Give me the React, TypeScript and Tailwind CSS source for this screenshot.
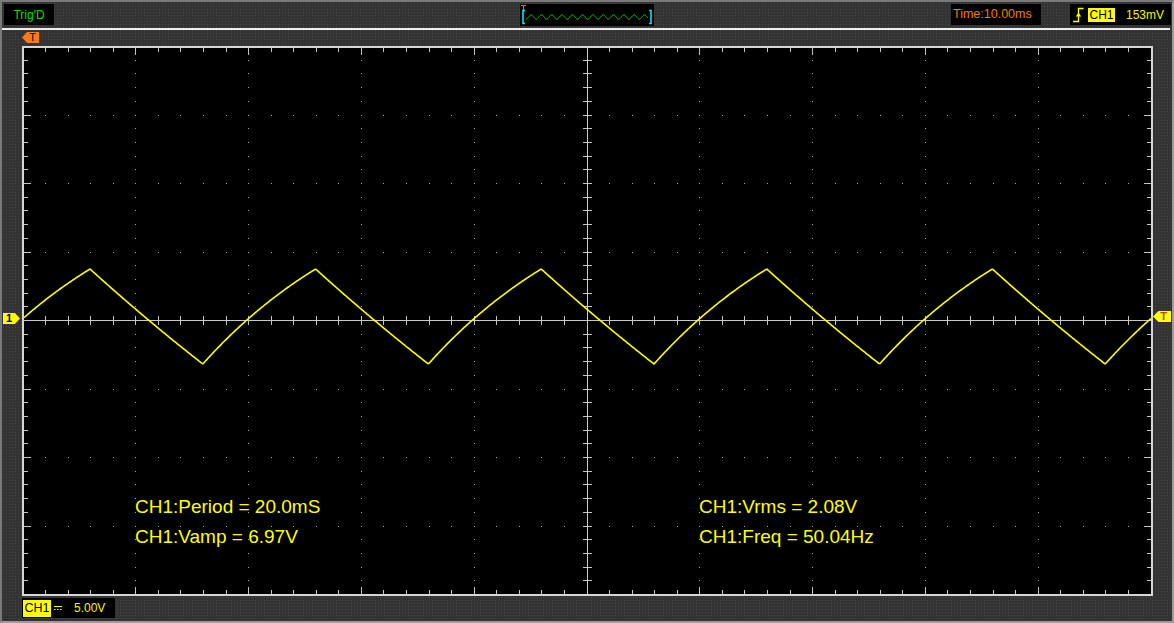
import React from "react";

const W = 1131;
const H = 550;
const DX = 112.8;
const DY = 68.5;

function gx(i: number) {
  return Math.floor(1 + DX * i) + 0.5;
}
function gy(j: number) {
  return Math.floor(0.5 + DY * j) + 0.5;
}
function mx(m: number) {
  return Math.floor(1 + (DX / 5) * m) + 0.5;
}
function my(n: number) {
  return Math.floor(0.5 + (DY / 5) * n) + 0.5;
}

const PK = 223;
const TR = 318;
const AMP = TR - PK;

function waveY(x: number) {
  const half = DX;
  const period = DX * 2;
  const p = (((x - 68) % period) + period) % period;
  if (p < half) {
    const t = p / half;
    const k = 0.15;
    const f = (1 - Math.exp(-k * t)) / (1 - Math.exp(-k));
    return PK + AMP * f;
  }
  const t = (p - half) / half;
  const k = 0.6;
  const f = (1 - Math.exp(-k * t)) / (1 - Math.exp(-k));
  return TR - AMP * f;
}

function Plot() {
  const dots: React.ReactElement[] = [];
  for (let i = 1; i <= 9; i++) {
    if (i === 5) continue;
    for (let n = 1; n <= 39; n++) {
      dots.push(<rect key={`v${i}-${n}`} x={gx(i) - 0.5} y={my(n) - 0.5} width={1} height={1} fill="#a8a8a8" />);
    }
  }
  for (let j = 1; j <= 7; j++) {
    if (j === 4) continue;
    for (let m = 1; m <= 49; m++) {
      dots.push(<rect key={`h${j}-${m}`} x={mx(m) - 0.5} y={gy(j) - 0.5} width={1} height={1} fill="#a8a8a8" />);
    }
  }
  const ticks: string[] = [];
  const cy = gy(4);
  const cx = gx(5);
  for (let m = 1; m <= 49; m++) {
    const x = mx(m);
    const major = m % 5 === 0;
    ticks.push(`M${x} 2V${major ? 9 : 6}`);
    ticks.push(`M${x} 548V${major ? 541 : 544}`);
    ticks.push(`M${x} ${cy - 4.5}V${cy + 4.5}`);
  }
  for (let n = 1; n <= 39; n++) {
    const y = my(n);
    const major = n % 5 === 0;
    ticks.push(`M2 ${y}H${major ? 9 : 6}`);
    ticks.push(`M1129 ${y}H${major ? 1122 : 1125}`);
    ticks.push(`M${cx - 4.5} ${y}H${cx + 4.5}`);
  }
  const pts: string[] = [];
  for (let x = 2; x <= 1129; x += 1) {
    pts.push(`${x},${waveY(x).toFixed(2)}`);
  }
  return (
    <svg width={W} height={H} viewBox={`0 0 ${W} ${H}`} className="block">
      <rect x={0} y={0} width={W} height={H} fill="#000" />
      {dots}
      <path d={ticks.join("")} stroke="#c4c4c4" strokeWidth={1} fill="none" shapeRendering="crispEdges" />
      <path d={`M${cx} 2V548M2 ${cy}H1129`} stroke="#c8c8c8" strokeWidth={1} shapeRendering="crispEdges" />
      <rect x={1} y={1} width={1129} height={548} fill="none" stroke="#d6d6d6" strokeWidth={2} shapeRendering="crispEdges" />
      <polyline points={pts.join(" ")} fill="none" stroke="#ffff00" strokeWidth={1.6} strokeLinejoin="round" />
    </svg>
  );
}

function MiniWave() {
  const pts: string[] = [];
  for (let x = 6; x <= 128; x += 0.5) {
    const y = 13 + 2.2 * Math.sin(((x - 6) / 10.3) * Math.PI * 2 + Math.PI / 2);
    pts.push(`${x},${y.toFixed(2)}`);
  }
  return (
    <svg width={134} height={22} viewBox="0 0 134 22" className="block">
      <path d="M1 1.5H6M3.5 1.5V7" stroke="#e06a10" strokeWidth={1.2} fill="none" />
      <path d="M5 6.5H3V19.5H5" stroke="#00e8f0" strokeWidth={1.6} fill="none" />
      <path d="M129 6.5H131V19.5H129" stroke="#00e8f0" strokeWidth={1.6} fill="none" />
      <polyline points={pts.join(" ")} fill="none" stroke="#00d800" strokeWidth={1} />
    </svg>
  );
}

export default function App() {
  return (
    <div
      className="w-[1174px] h-[623px] relative overflow-hidden border-t-2 border-l-2 border-r-2 border-b-2 border-t-[#7a7a7a] border-l-[#7a7a7a] border-r-[#9c9c9c] border-b-[#9c9c9c] bg-[#333333] bg-[radial-gradient(circle,#474747_0.7px,transparent_0.9px)] bg-[length:3px_3px] font-['Liberation_Sans',Arial,sans-serif]"
    >
      {/* top bar */}
      <div className="flex h-[26px] pt-[2px]">
        <div className="ml-[2px] w-[50px] h-[21px] bg-black flex items-center justify-center text-[12px] leading-none text-[#00e000]">
          Trig'D
        </div>
        <div className="ml-[466px] w-[134px] h-[22px] bg-black">
          <MiniWave />
        </div>
        <div className="ml-[297px] w-[90px] h-[21px] bg-black flex items-center pl-[2px] text-[12.5px] leading-none text-[#f07c00]">
          Time:10.00ms
        </div>
        <div className="ml-[29px] w-[101px] h-[21px] bg-black flex items-center">
          <svg width={16} height={21} viewBox="0 0 16 21" className="block">
            <path d="M3 17.5H8.5V4.5H13.5" stroke="#ffff00" strokeWidth={1.3} fill="none" />
            <path d="M8.5 8.5L5.8 12.5H11.2Z" fill="#ffff00" />
          </svg>
          <div className="ml-[2px] w-[27px] h-[14px] bg-[#ffff00] flex items-center justify-center text-[12px] leading-none text-black">
            CH1
          </div>
          <div className="ml-[11px] text-[12px] leading-none text-[#f4f400]">153mV</div>
        </div>
      </div>
      {/* separator */}
      <div className="h-[2px] bg-[#ececec] mr-[2px]" />
      {/* trigger position row */}
      <div className="h-[16px] pt-[2px] pl-[20px]">
        <div className="w-[17px] h-[11px] bg-[#ff7a10] [clip-path:polygon(30%_0,100%_0,100%_100%,30%_100%,0_50%)] flex items-center justify-end pr-[3px] text-[11px] leading-none text-black">
          T
        </div>
      </div>
      {/* plot row */}
      <div className="relative h-[550px] pl-[20px]">
        <Plot />
        <div className="absolute left-[1px] top-[267px] w-[17px] h-[11px] bg-[#ffff00] [clip-path:polygon(0_0,70%_0,100%_50%,70%_100%,0_100%)] flex items-center pl-[3px] text-[11px] font-bold leading-none text-black">
          1
        </div>
        <div className="absolute left-[1151px] top-[265px] w-[18px] h-[11px] bg-[#ffff00] [clip-path:polygon(30%_0,100%_0,100%_100%,30%_100%,0_50%)] flex items-center justify-end pr-[4px] text-[11px] font-bold leading-none text-[#b04800]">
          T
        </div>
        <div className="absolute left-[133px] top-[451px] text-[19px] leading-none text-[#ffff00] whitespace-nowrap">
          CH1:Period = 20.0mS
        </div>
        <div className="absolute left-[133px] top-[481px] text-[19px] leading-none text-[#ffff00] whitespace-nowrap">
          CH1:Vamp = 6.97V
        </div>
        <div className="absolute left-[697px] top-[451px] text-[19px] leading-none text-[#ffff00] whitespace-nowrap">
          CH1:Vrms = 2.08V
        </div>
        <div className="absolute left-[697px] top-[481px] text-[19px] leading-none text-[#ffff00] whitespace-nowrap">
          CH1:Freq = 50.04Hz
        </div>
      </div>
      {/* bottom row */}
      <div className="pl-[20px] pt-[2px]">
        <div className="w-[93px] h-[20px] bg-black flex items-center">
          <div className="ml-[1px] w-[28px] h-[17px] bg-[#ffff00] flex items-center justify-center text-[12.5px] leading-none text-black">
            CH1
          </div>
          <svg width={10} height={10} viewBox="0 0 10 10" className="ml-[2px] block">
            <path d="M1 3.5H9" stroke="#ffff00" strokeWidth={1} />
            <path d="M1 6.5H2.5M4 6.5H5.5M7 6.5H8.5" stroke="#ffff00" strokeWidth={1} />
          </svg>
          <div className="ml-[11px] text-[12px] leading-none text-[#f4f400]">5.00V</div>
        </div>
      </div>
    </div>
  );
}
